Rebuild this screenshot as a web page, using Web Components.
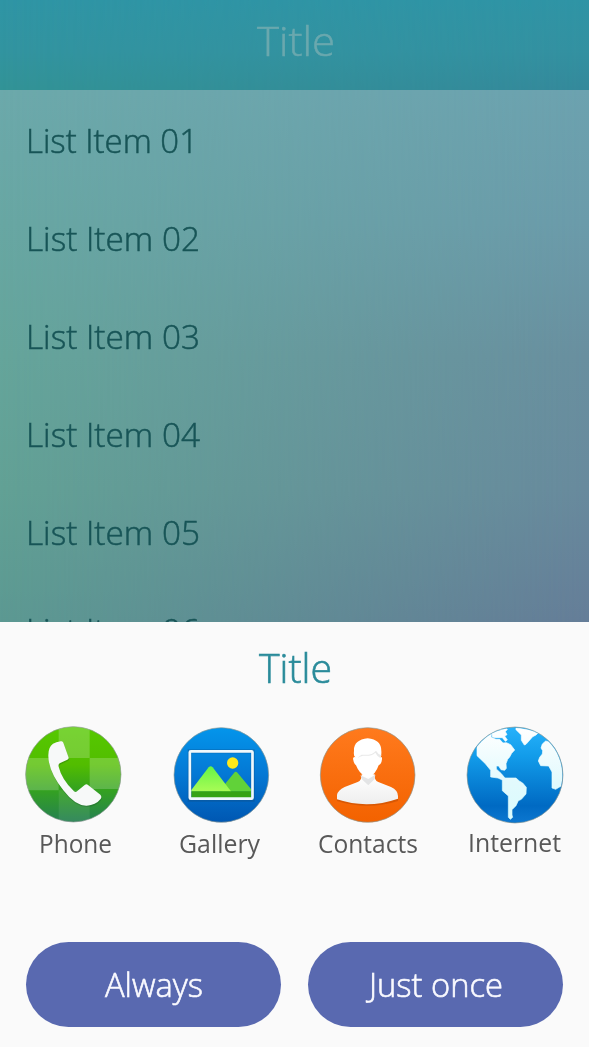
<!DOCTYPE html>
<html lang="en">
<head>
<meta charset="utf-8">
<title>App chooser</title>
<style>
body { margin: 0; width: 589px; height: 1047px; overflow: hidden; background: #fafafa; font-family: "Open Sans", "Noto Sans", sans-serif; }
</style>
</head>
<body>
<chooser-screen></chooser-screen>
<script>
const define = (name, html, init) => {
  const template = document.createElement('template');
  template.innerHTML = html;
  customElements.define(name, class extends HTMLElement {
    connectedCallback() {
      if (this.shadowRoot) return;
      this.attachShadow({ mode: 'open' }).append(template.content.cloneNode(true));
      if (init) init(this, this.shadowRoot);
    }
  });
};

// Text condensed or widened to a given width.
define('fit-text', `
<style>
:host { display: block; white-space: nowrap; }
span { display: inline-block; transform-origin: 0 50%; }
</style>
<span><slot></slot></span>`, (host, root) => {
  const w = +host.getAttribute('width');
  host.style.width = w + 'px';
  const span = root.querySelector('span');
  span.style.transform = 'scaleX(' + w / span.getBoundingClientRect().width + ')';
});

define('title-bar', `
<style>
:host { display: grid; grid-template: 90px / 589px; height: 90px;
  color: #6aa8ae; font-size: 40px; font-weight: 300; line-height: 82px; -webkit-text-stroke: .5px #6aa8ae; }
.tint, .text { grid-area: 1 / 1; }
.left { background: linear-gradient(#2f95a5, #3294a0 55%, #329396); }
.right { background: linear-gradient(#2f94a5, #3391a1 55%, #34899b);
  -webkit-mask-image: linear-gradient(90deg, transparent, #000); mask-image: linear-gradient(90deg, transparent, #000); }
.text { display: flex; justify-content: center; padding-left: 2px; }
</style>
<div class="tint left"></div><div class="tint right"></div>
<div class="text"><slot></slot></div>`);

define('list-row', `
<style>
:host { display: block; box-sizing: border-box; height: 98px; padding: 2px 0 0 26px; line-height: 98px; font-size: 32.5px; font-weight: 300; color: #185557; -webkit-text-stroke: .5px #185557; }
</style>
<slot></slot>`);

define('item-list', `
<style>
:host { display: grid; grid-template: 532px / 589px; height: 532px; overflow: hidden; }
.tint, .rows { grid-area: 1 / 1; overflow: hidden; }
.left { background: linear-gradient(#6ca9ab, #68a7a3 25%, #65a59b 50%, #62a195 75%, #5c9992); }
.right { background: linear-gradient(#6ca2af, #6b9baa 25%, #698f9f 50%, #688a9d 75%, #657d98);
  -webkit-mask-image: linear-gradient(90deg, transparent, #000); mask-image: linear-gradient(90deg, transparent, #000); }
</style>
<div class="tint left"></div><div class="tint right"></div>
<div class="rows"><slot></slot></div>`);

const disc = (cx, cy, r, fill) => `<circle cx="${cx}" cy="${cy}" r="${r}" fill="${fill}" stroke="#8b9692" stroke-opacity=".65" stroke-width="3"/>`;
const icons = {
  phone: `<svg viewBox="18 21 315 315">
<defs><linearGradient id="g" x2="0" y2="1"><stop stop-color="#56c900"/><stop offset=".4" stop-color="#52bd00"/><stop offset=".65" stop-color="#35a31e"/><stop offset="1" stop-color="#258052"/></linearGradient>
<clipPath id="c"><circle cx="175" cy="178" r="142"/></clipPath></defs>
${disc(175, 178, 143, 'url(#g)')}
<g clip-path="url(#c)" fill="#fff"><path opacity=".2" d="M131 30h93v99h-93zM30 129h101v97H30zM224 129h100v93H224z"/><path opacity=".08" d="M131 226h93v100h-93z"/></g>
<path d="M137 79Q143 77 145 83L160 125Q163 132 157 134L134 145Q129 148 131 155Q140 193 177 229Q182 233 187 228L210 209Q215 206 220 211L256 239Q262 246 256 253Q242 271 215 272Q181 273 145 226Q101 170 100 124Q99 96 114 86Q123 82 137 79Z" fill="#164b20" opacity=".28" transform="translate(1 4)"/>
<path d="M137 79Q143 77 145 83L160 125Q163 132 157 134L134 145Q129 148 131 155Q140 193 177 229Q182 233 187 228L210 209Q215 206 220 211L256 239Q262 246 256 253Q242 271 215 272Q181 273 145 226Q101 170 100 124Q99 96 114 86Q123 82 137 79Z" fill="#f7f9f9"/></svg>`,
  gallery: `<svg viewBox="24 21 315 315">
<defs><linearGradient id="g" x2="0" y2="1"><stop stop-color="#0495eb"/><stop offset=".5" stop-color="#0478d4"/><stop offset="1" stop-color="#0057b2"/></linearGradient>
<linearGradient id="m" x2="0" y2="1"><stop stop-color="#66f447"/><stop offset="1" stop-color="#a9fc55"/></linearGradient></defs>
${disc(184, 180, 142, 'url(#g)')}
<rect x="89" y="109" width="189" height="145" fill="none" stroke="#124a80" stroke-opacity=".4" stroke-width="12"/>
<path d="M197 205L222 174Q227 167 233 174L273 222V230H185Z" fill="#61d239"/>
<path d="M94 225L146 157Q152 150 158 157L214 230H94Z" fill="url(#m)"/>
<path d="M94 229H273V249H94Z" fill="#35a314"/>
<circle cx="218" cy="144" r="17" fill="#ffe91b"/>
<rect x="89.500" y="109" width="188" height="142" rx="3" fill="none" stroke="#eff8fc" stroke-width="8"/></svg>`,
  contacts: `<svg viewBox="30 21 315 315">
<defs><linearGradient id="g" x2="0" y2="1"><stop stop-color="#ff7a1d"/><stop offset="1" stop-color="#f36200"/></linearGradient>
<linearGradient id="b" x2="0" y2="1"><stop stop-color="#fff"/><stop offset="1" stop-color="#eee"/></linearGradient></defs>
${disc(188, 180, 142, 'url(#g)')}
<path d="M96 254V240Q98 226 119 216L158 201Q171 197 170 182H209Q207 197 220 201L258 216Q279 226 279 243V254Q187 283 96 254Z" fill="#a23d00" opacity=".35" transform="translate(0 4)"/>
<path d="M96 253V240Q98 226 119 216L158 201Q171 197 170 178H209Q207 197 220 201L258 216Q279 226 279 243V251Q187 283 96 253Z" fill="url(#b)"/>
<path d="M166 181L190 192L211 179L209 192L190 211L172 194Z" fill="#e3e4e5"/>
<path d="M151 127Q145 124 147 108Q145 75 188 70Q229 74 229 108Q230 125 226 127Q232 123 231 133Q230 147 221 151Q211 179 194 185Q187 187 180 184Q162 174 153 151Q147 148 144 131Q145 124 151 127Z" fill="#fff"/>
<path d="M158 130Q162 123 170 119Q202 122 213 107Q220 119 229 121L226 129Q217 125 211 113Q198 125 174 122Q163 124 158 130Z" fill="#e9e9e9"/></svg>`,
  internet: `<svg viewBox="21 21 315 315">
<defs><linearGradient id="g" x2="0" y2="1"><stop stop-color="#27b2fb"/><stop offset=".3" stop-color="#129cea"/><stop offset=".82" stop-color="#006ac3"/><stop offset="1" stop-color="#0c77d0"/></linearGradient>
<linearGradient id="l" gradientUnits="userSpaceOnUse" x1="0" x2="0" y1="40" y2="310"><stop stop-color="#fff"/><stop offset=".6" stop-color="#e2fafd"/><stop offset="1" stop-color="#dafbfd"/></linearGradient>
<clipPath id="c"><circle cx="180" cy="180" r="142"/></clipPath></defs>
${disc(180, 180, 144, 'url(#g)')}
<g clip-path="url(#c)" fill="url(#l)" stroke="url(#l)" stroke-width="2" stroke-linejoin="round">
<path d="M66 92L92 67L109 55L108 67L123 73H134L144 84L154 83L167 89L179 105L170 115L164 126L158 133L153 146L154 160L149 166L138 164L131 153L124 153V162L138 175L150 189H183L193 198L203 204L214 217L213 237L199 253L190 257L183 272L171 284V300L173 307L166 313L160 307V243L142 227V195L129 189L107 186V166L91 146L66 122Z"/>
<path d="M111 55Q129 42 151 36L157 43L151 50L156 59L149 63L157 75L151 79L142 68H122L112 66Z"/>
<path d="M183 39Q223 42 249 54L243 60L233 65L213 88L208 90L199 76V60L183 44Z"/>
<path d="M262 87L272 78L281 80L340 80V200L302 223L291 219V171L281 153L257 152L250 138L254 127L262 117L263 107L258 99Z"/></g></svg>`
};

define('app-icon', `
<style>
:host { display: flex; flex-direction: column; align-items: center; width: 147px; color: #585858; font-size: 26px; line-height: 36px; }
svg { display: block; width: 105px; height: 105px; margin-bottom: -2px; }
:host([name="phone"]) .label { padding-left: 3px; }
:host([name="gallery"]) .label { padding-right: 3px; }
:host([name="internet"]) .label { margin-top: -1px; }
</style>
<div class="art"></div><div class="label"><slot></slot></div>`, (host, root) => {
  root.querySelector('.art').innerHTML = icons[host.getAttribute('name')];
});

define('pill-button', `
<style>
:host { display: block; width: 255px; height: 85px; }
button { display: flex; width: 100%; height: 100%; align-items: center; justify-content: center; border: 0; border-radius: 43px; padding: 0; background: #5969b0; color: #fafaff; font: 300 32.5px/85px "Open Sans", "Noto Sans", sans-serif; -webkit-text-stroke: .6px #fafaff; }
</style>
<button><slot></slot></button>`);

define('bottom-sheet', `
<style>
:host { display: block; height: 425px; background: #fafafa; }
header { display: flex; justify-content: center; height: 100px; padding-left: 1px; line-height: 92px; font-size: 40px; font-weight: 300; color: #2a8b9a; -webkit-text-stroke: .6px #2a8b9a; }
.apps { display: flex; height: 220px; }
footer { display: flex; gap: 27px; padding-left: 26px; }
</style>
<header><slot name="title"></slot></header>
<div class="apps"><slot></slot></div>
<footer><slot name="actions"></slot></footer>`);

define('chooser-screen', `
<style>:host { display: flex; flex-direction: column; width: 589px; height: 1047px; }</style>
<title-bar><fit-text width="78">Title</fit-text></title-bar>
<item-list>
<list-row><fit-text width="172">List Item 01</fit-text></list-row>
<list-row><fit-text width="174">List Item 02</fit-text></list-row>
<list-row><fit-text width="174">List Item 03</fit-text></list-row>
<list-row><fit-text width="174">List Item 04</fit-text></list-row>
<list-row><fit-text width="174">List Item 05</fit-text></list-row>
<list-row><fit-text width="174">List Item 06</fit-text></list-row>
</item-list>
<bottom-sheet>
<fit-text slot="title" width="73">Title</fit-text>
<app-icon name="phone"><fit-text width="73">Phone</fit-text></app-icon>
<app-icon name="gallery"><fit-text width="81">Gallery</fit-text></app-icon>
<app-icon name="contacts"><fit-text width="100">Contacts</fit-text></app-icon>
<app-icon name="internet"><fit-text width="93">Internet</fit-text></app-icon>
<pill-button slot="actions"><fit-text width="98">Always</fit-text></pill-button>
<pill-button slot="actions"><fit-text width="134">Just once</fit-text></pill-button>
</bottom-sheet>`);
</script>
</body>
</html>
